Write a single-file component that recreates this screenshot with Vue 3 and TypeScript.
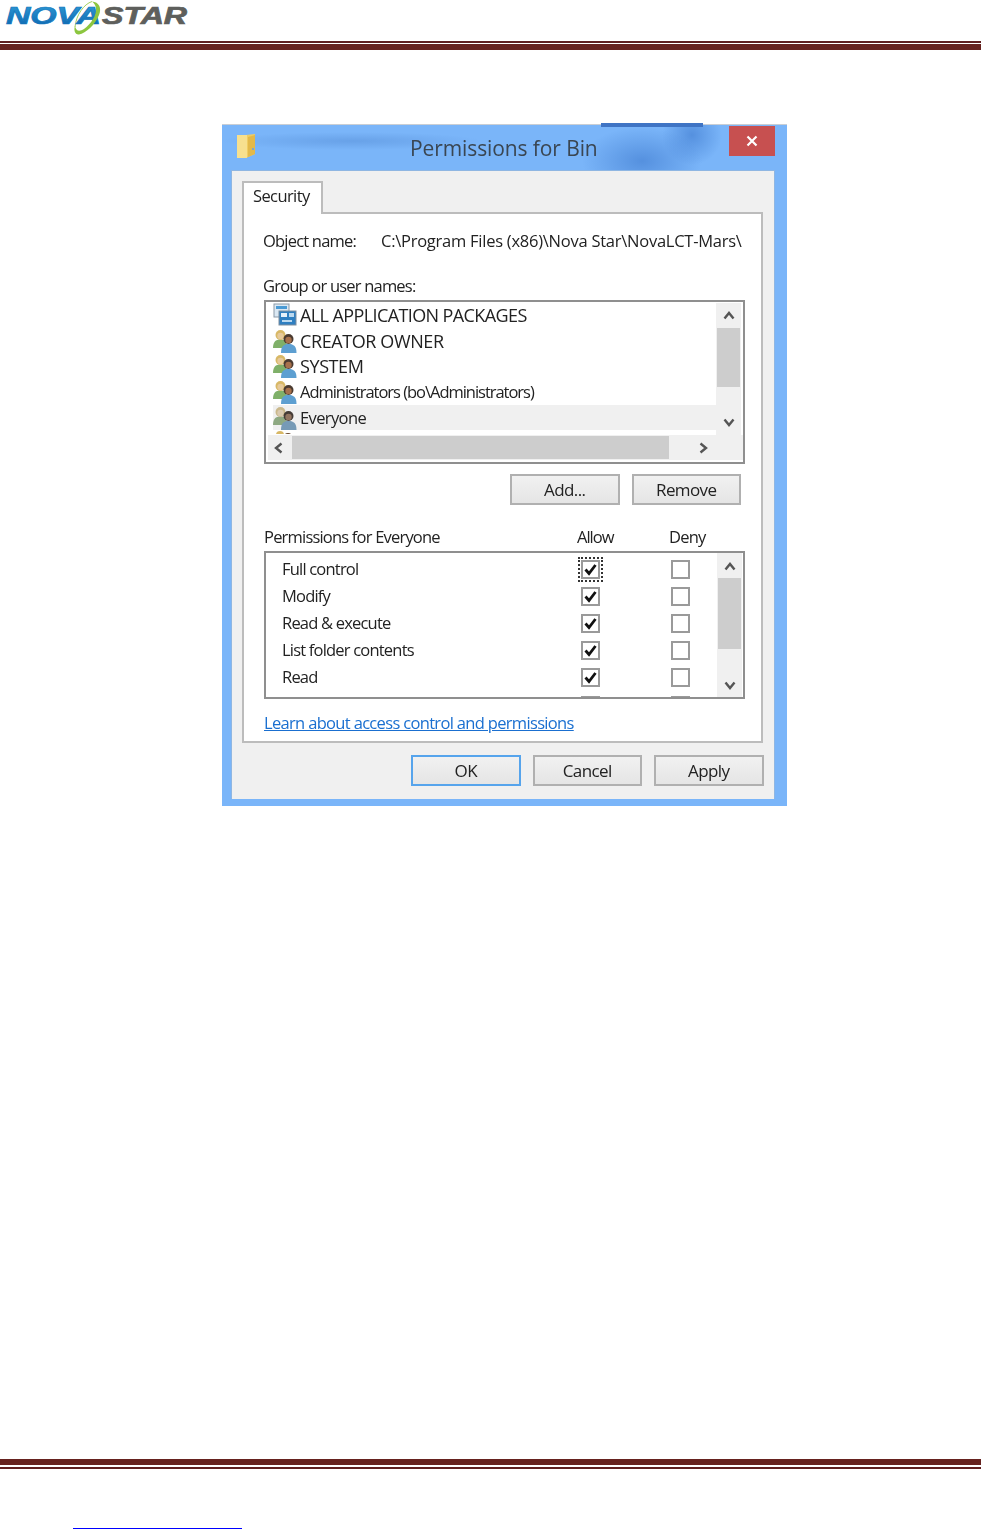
<script setup lang="ts">
interface Principal { name: string; kind: 'package' | 'group'; fit: 'long' | 'caps' | 'mixed' | 'tight'; selected?: boolean }
const principals: Principal[] = [
  { name: 'ALL APPLICATION PACKAGES', kind: 'package', fit: 'long' },
  { name: 'CREATOR OWNER', kind: 'group', fit: 'caps' },
  { name: 'SYSTEM', kind: 'group', fit: 'caps' },
  { name: 'Administrators (bo\\Administrators)', kind: 'group', fit: 'tight' },
  { name: 'Everyone', kind: 'group', fit: 'mixed', selected: true },
]
const permissions = ['Full control', 'Modify', 'Read & execute', 'List folder contents', 'Read']
</script>

<template>
  <div class="page">
    <header class="top">
      <svg class="logo" width="190" height="41" viewBox="0 0 190 41" role="img" aria-label="NovaStar">
        <defs>
          <linearGradient id="novaFill" x1="0" y1="0" x2="0" y2="1">
            <stop offset="0" stop-color="#2f9bd6" />
            <stop offset="1" stop-color="#0b63ad" />
          </linearGradient>
        </defs>
        <path d="M75 27C76 15 84 4 92 1.500" fill="none" stroke="#a5d15c" stroke-width="1" />
        <text x="6" y="24" textLength="95" lengthAdjust="spacingAndGlyphs" class="logo-text nova">NOVA</text>
        <text x="102" y="24" textLength="85" lengthAdjust="spacingAndGlyphs" class="logo-text star">STAR</text>
        <path d="M92 1.500C99 2 102 8 99 15C95 25 86 33 79 34.500C75 35 73.500 30 75 26C76 31 79 32 84 29C91 24 97 15 96 8C95.500 5 94 3 92 1.500Z" fill="#8cc63f" />
      </svg>
      <div class="rule-thin"></div>
      <div class="rule-thick"></div>
    </header>

    <section class="dialog">
      <div class="titlebar">
        <svg class="folder" width="22" height="26" viewBox="0 0 22 26">
          <path d="M1 2H10L19 1V21L10 25H1Z" fill="#f0cd62" />
          <path d="M1 2H11V25H1Z" fill="#f7e08f" />
          <path d="M12 4L19 2V21L12 24Z" fill="#e3b94a" />
          <rect x="16" y="15" width="2" height="2" fill="#7fa7c9" />
        </svg>
        <h1 class="title">Permissions for Bin</h1>
        <div class="close">
          <svg width="12" height="12" viewBox="0 0 12 12"><path d="M1.500 1.500L10.500 10.500M10.500 1.500L1.500 10.500" stroke="#fff" stroke-width="2.200" /></svg>
        </div>
      </div>

      <div class="client">
        <div class="tab">Security</div>
        <div class="panel">
          <div class="object-row">
            <span class="object-label">Object name:</span>
            <span class="object-value">C:\Program Files (x86)\Nova Star\NovaLCT-Mars\</span>
          </div>
          <div class="group-label">Group or user names:</div>

          <div class="listbox">
            <div class="list-main">
              <div class="rows">
                <div v-for="p in principals" :key="p.name" class="row" :class="{ selected: p.selected }">
                  <svg v-if="p.kind === 'package'" class="row-icon" width="24" height="24" viewBox="0 0 24 24">
                    <rect x="1" y="1" width="15" height="13" fill="#dbe8f3" stroke="#8b9aa8" />
                    <rect x="3" y="3" width="11" height="3" fill="#4a9ad4" />
                    <rect x="6" y="8" width="17" height="14" fill="#2f7fc1" stroke="#7f8f9f" />
                    <rect x="8" y="10" width="6" height="4" fill="#e6f1fa" />
                    <rect x="16" y="10" width="5" height="4" fill="#bcd9ef" />
                    <rect x="9" y="17" width="10" height="2" fill="#bcd9ef" />
                  </svg>
                  <svg v-else class="row-icon" :class="{ dim: p.selected }" width="24" height="24" viewBox="0 0 24 24">
                    <path d="M0 19C0 13 2.500 10.500 7.500 10.500C12.500 10.500 14 13 14 19Z" fill="#7fb069" />
                    <circle cx="7.500" cy="6" r="5" fill="#d8b866" />
                    <circle cx="7.500" cy="7" r="3.200" fill="#e6c99a" />
                    <path d="M8 24C8 17.500 10.500 15 15.500 15C21 15 23.500 17.500 23.500 24Z" fill="#5d9fd1" />
                    <circle cx="15.500" cy="10" r="5" fill="#4a3a30" />
                    <circle cx="15.500" cy="11" r="3.200" fill="#a8714c" />
                  </svg>
                  <span class="row-text" :class="p.fit">{{ p.name }}</span>
                </div>
                <svg class="row-peek" width="24" height="5" viewBox="0 0 24 5">
                  <circle cx="7" cy="5" r="4" fill="#d8b866" />
                  <circle cx="15" cy="7" r="4" fill="#6b4a32" />
                </svg>
              </div>
              <div class="hscroll">
                <svg class="arrow" width="12" height="12" viewBox="0 0 12 12"><path d="M8.500 1.500L3 6L8.500 10.500" fill="none" stroke="#555" stroke-width="2.400" /></svg>
                <div class="hthumb"></div>
                <svg class="arrow" width="12" height="12" viewBox="0 0 12 12"><path d="M3.500 1.500L9 6L3.500 10.500" fill="none" stroke="#555" stroke-width="2.400" /></svg>
              </div>
            </div>
            <div class="vscroll vscroll-a">
              <svg class="arrow" width="12" height="12" viewBox="0 0 12 12"><path d="M1.500 8.500L6 3L10.500 8.500" fill="none" stroke="#555" stroke-width="2.400" /></svg>
              <div class="vthumb"></div>
              <svg class="arrow" width="12" height="12" viewBox="0 0 12 12"><path d="M1.500 3.500L6 9L10.500 3.500" fill="none" stroke="#555" stroke-width="2.400" /></svg>
            </div>
          </div>

          <div class="actions-top">
            <button class="btn">Add...</button>
            <button class="btn">Remove</button>
          </div>

          <div class="perm-head">
            <span class="perm-title">Permissions for Everyone</span>
            <span class="perm-allow">Allow</span>
            <span class="perm-deny">Deny</span>
          </div>

          <div class="permbox">
            <div class="perm-rows">
              <div v-for="(perm, i) in permissions" :key="perm" class="perm-row">
                <span class="perm-name">{{ perm }}</span>
                <span class="check-cell">
                  <span class="check" :class="{ focus: i === 0 }">
                    <svg width="15" height="15" viewBox="0 0 15 15"><path d="M2.500 7.500L6 11.500L12.500 3" fill="none" stroke="#111" stroke-width="2.800" /></svg>
                  </span>
                </span>
                <span class="check-cell"><span class="check"></span></span>
              </div>
              <div class="perm-row peek">
                <span class="perm-name"></span>
                <span class="check-cell"><span class="check"></span></span>
                <span class="check-cell"><span class="check"></span></span>
              </div>
            </div>
            <div class="vscroll vscroll-b">
              <svg class="arrow" width="12" height="12" viewBox="0 0 12 12"><path d="M1.500 8.500L6 3L10.500 8.500" fill="none" stroke="#555" stroke-width="2.400" /></svg>
              <div class="vthumb"></div>
              <svg class="arrow" width="12" height="12" viewBox="0 0 12 12"><path d="M1.500 3.500L6 9L10.500 3.500" fill="none" stroke="#555" stroke-width="2.400" /></svg>
            </div>
          </div>

          <a class="learn">Learn about access control and permissions</a>
        </div>

        <div class="actions-bottom">
          <button class="btn default">OK</button>
          <button class="btn">Cancel</button>
          <button class="btn">Apply</button>
        </div>
      </div>
    </section>

    <footer class="bottom">
      <div class="rule-thick"></div>
      <div class="rule-thin"></div>
      <div class="foot-link"></div>
    </footer>
  </div>
</template>

<style>
html, body { margin: 0; background: #fff; }
</style>

<style scoped>
.page {
  position: relative;
  width: 981px;
  height: 1529px;
  overflow: hidden;
  background: #fff;
  display: flex;
  flex-direction: column;
  font-family: "Open Sans", "Liberation Sans", sans-serif;
  color: #222;
}
.top { height: 50px; flex: none; display: flex; flex-direction: column; }
.logo { display: block; height: 41px; flex: none; }
.logo-text { font: italic 700 23px "Liberation Sans", sans-serif; stroke-width: .7px; }
.nova { fill: url(#novaFill); stroke: #1478bd; }
.star { fill: #5e5f5c; stroke: #5e5f5c; }
.rule-thin { height: 2px; flex: none; background: #5f1f20; }
.rule-thick { height: 6px; flex: none; background: #66221f; }
.top .rule-thick { margin-top: 1px; }

.dialog {
  box-sizing: border-box;
  width: 565px;
  height: 682px;
  flex: none;
  margin: 74px 0 0 222px;
  display: flex;
  flex-direction: column;
  position: relative;
  background:
    radial-gradient(ellipse 60px 34px at 420px 36px, rgba(60, 120, 205, .6), transparent 100%),
    radial-gradient(ellipse 30px 30px at 470px 10px, rgba(60, 120, 205, .6), transparent 100%),
    radial-gradient(ellipse 130px 9px at 130px 16px, rgba(70, 125, 200, .35), transparent 100%),
    #7ab5f9;
  border-top: 1px solid #c9ced4;
  filter: blur(.5px);
}
.dialog::before {
  content: "";
  position: absolute;
  left: 379px;
  top: -2px;
  width: 102px;
  height: 4px;
  background: #3f74c4;
}
.titlebar { position: relative; height: 45px; flex: none; }
.folder { position: absolute; left: 14px; top: 8px; }
.title {
  margin: 0;
  position: absolute;
  left: 188px;
  top: 9px;
  font-size: 21px;
  line-height: 28px;
  font-weight: 400;
  letter-spacing: -.1px;
  color: #3a4652;
}
.close {
  position: absolute;
  left: 507px;
  top: 1px;
  width: 46px;
  height: 30px;
  background: #c75050;
  display: flex;
  align-items: center;
  justify-content: center;
}
.client {
  flex: 1;
  margin: 0 12px 7px 9px;
  padding: 10px 13px 0 10px;
  background: #f0f0f0;
  border: 1px solid #8fb6e2;
  border-bottom: 0;
  box-sizing: border-box;
  display: flex;
  flex-direction: column;
  position: relative;
}
.tab {
  box-sizing: border-box;
  width: 81px;
  height: 33px;
  flex: none;
  padding: 1px 0 0 9px;
  background: #fff;
  border: 2px solid #bcbcbc;
  border-bottom: 0;
  font-size: 16.500px;
  line-height: 24px;
  letter-spacing: -.6px;
  position: relative;
  z-index: 1;
  margin-bottom: -2px;
}
.panel {
  box-sizing: border-box;
  width: 521px;
  height: 531px;
  flex: none;
  padding: 0 17px 0 20px;
  background: #fff;
  border: 2px solid #bcbcbc;
  display: flex;
  flex-direction: column;
  font-size: 16.500px;
  letter-spacing: -.8px;
}
.object-row { display: flex; height: 24px; margin: 15px 0 0 -1px; line-height: 24px; white-space: nowrap; overflow: hidden; flex: none; }
.object-label { width: 118px; flex: none; }
.object-value { overflow: hidden; letter-spacing: -.25px; }
.group-label { height: 24px; line-height: 24px; margin: 21px 0 0 -1px; flex: none; }

.listbox {
  box-sizing: border-box;
  margin-top: 2px;
  width: 481px;
  height: 164px;
  flex: none;
  border: 2px solid #8f8f8f;
  display: flex;
  padding: 1px 2px 2px 2px;
}
.list-main { width: 448px; flex: none; display: flex; flex-direction: column; margin-top: -1px; }
.rows { height: 132px; overflow: hidden; flex: none; }
.row { height: 25.700px; display: flex; align-items: center; padding-left: 5px; white-space: nowrap; }
.row.selected { background: #f0f0f0; margin-left: 5px; padding-left: 0; }
.row-icon { flex: none; margin-right: 3px; }
.row-icon.dim { filter: saturate(.55); }
.row-text { line-height: 24px; }
.row-text.long { font-size: 18px; letter-spacing: -.6px; }
.row-text.caps { font-size: 18px; letter-spacing: -.4px; }
.row-text.mixed { font-size: 16.500px; letter-spacing: -.62px; }
.row-text.tight { font-size: 16.500px; letter-spacing: -1.030px; }
.row-peek { display: block; margin-left: 5px; }
.hscroll { height: 25px; width: 475px; flex: none; margin-top: 1px; background: #f0f0f0; display: flex; align-items: center; position: relative; z-index: 1; }
.hthumb { margin-left: 7px; width: 377px; height: 23px; background: #cdcdcd; margin-right: 28px; flex: none; }
.hscroll .arrow:first-child { margin-left: 5px; }
.arrow { flex: none; }
.vscroll {
  width: 25px;
  flex: none;
  background: #f0f0f0;
  display: flex;
  flex-direction: column;
  align-items: center;
}
.vscroll-a { height: 133px; padding-top: 7px; box-sizing: border-box; }
.vscroll-a .vthumb { margin-top: 6px; height: 59px; }
.vscroll-a .arrow:last-child { margin-top: 29px; }
.vthumb { width: 23px; background: #cdcdcd; flex: none; }

.btn {
  box-sizing: border-box;
  width: 109.500px;
  height: 31px;
  flex: none;
  padding: 0;
  border: 2px solid #b0b0b0;
  background: linear-gradient(180deg, #f1f1f1, #e5e5e5);
  font-family: inherit;
  font-size: 17px;
  letter-spacing: -.6px;
  color: #222;
}
.btn.default { border-color: #56a4ec; }
.actions-top { display: flex; gap: 12px; margin: 10px 0 0 246px; flex: none; }
.perm-head { display: flex; height: 24px; line-height: 24px; margin-top: 20px; flex: none; }
.perm-title { width: 313px; flex: none; }
.perm-allow { width: 92px; flex: none; letter-spacing: -1px; }

.permbox {
  box-sizing: border-box;
  margin-top: 2px;
  width: 481px;
  height: 148px;
  flex: none;
  border: 2px solid #8f8f8f;
  display: flex;
  overflow: hidden;
}
.perm-rows { flex: none; width: 451px; padding-top: 3px; box-sizing: border-box; }
.perm-row { display: flex; align-items: center; height: 27.100px; }
.perm-name { width: 282px; margin: 0 0 2px 16px; flex: none; white-space: nowrap; }
.check-cell { width: 90px; flex: none; display: flex; padding-left: 17px; box-sizing: border-box; }
.check {
  box-sizing: border-box;
  width: 19px;
  height: 19px;
  border: 2px solid #9a9a9a;
  background: #fff;
  position: relative;
  display: flex;
  align-items: center;
  justify-content: center;
}
.check.focus { outline: 2px dotted #333; outline-offset: 1px; }
.vscroll-b { height: 144px; padding-top: 8px; box-sizing: border-box; }
.vscroll-b .vthumb { margin-top: 5px; height: 71px; }
.vscroll-b .arrow:last-child { margin-top: 30px; }

.learn {
  margin-top: 12px;
  font-size: 16.500px;
  line-height: 24px;
  letter-spacing: -.67px;
  color: #1a6fd0;
  text-decoration: underline;
  white-space: nowrap;
  flex: none;
}
.actions-bottom { display: flex; gap: 12px; margin: 12px 0 0 169px; flex: none; }

.bottom { margin-top: 653px; display: flex; flex-direction: column; flex: none; }
.bottom .rule-thin { margin-top: 2px; }
.foot-link { margin: 59px 0 0 73px; width: 169px; height: 2px; background: #0000ff; flex: none; }
</style>
